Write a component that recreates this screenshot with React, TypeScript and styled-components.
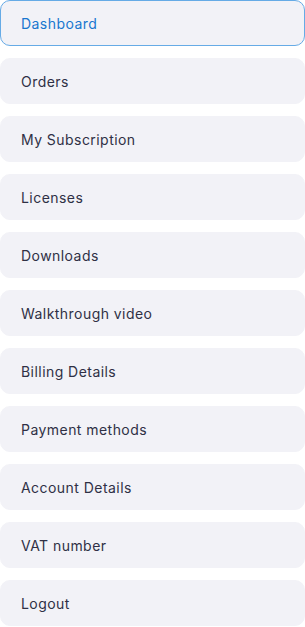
import React from 'react';
import styled, { createGlobalStyle } from 'styled-components';

const GlobalStyle = createGlobalStyle`
  html, body {
    margin: 0;
    padding: 0;
    background: #ffffff;
  }
  * {
    box-sizing: border-box;
  }
`;

const Nav = styled.nav`
  display: flex;
  flex-direction: column;
  gap: 12px;
  width: 305px;
  font-family: 'Inter', 'Noto Sans', sans-serif;
`;

const NavItem = styled.a<{ $active?: boolean }>`
  display: flex;
  align-items: center;
  height: 46px;
  padding: 0 20px;
  border-radius: 10px;
  background: #f2f2f7;
  border: 1px solid ${(p) => (p.$active ? '#66abe6' : '#f2f2f7')};
  color: ${(p) => (p.$active ? '#1877cf' : '#2f3045')};
  font-size: 14px;
  font-weight: 400;
  letter-spacing: 0.45px;
  text-decoration: none;
  cursor: pointer;
`;

const items = [
  'Dashboard',
  'Orders',
  'My Subscription',
  'Licenses',
  'Downloads',
  'Walkthrough video',
  'Billing Details',
  'Payment methods',
  'Account Details',
  'VAT number',
  'Logout',
];

export default function App() {
  return (
    <>
      <GlobalStyle />
      <Nav>
        {items.map((label, i) => (
          <NavItem key={label} $active={i === 0}>
            {label}
          </NavItem>
        ))}
      </Nav>
    </>
  );
}
